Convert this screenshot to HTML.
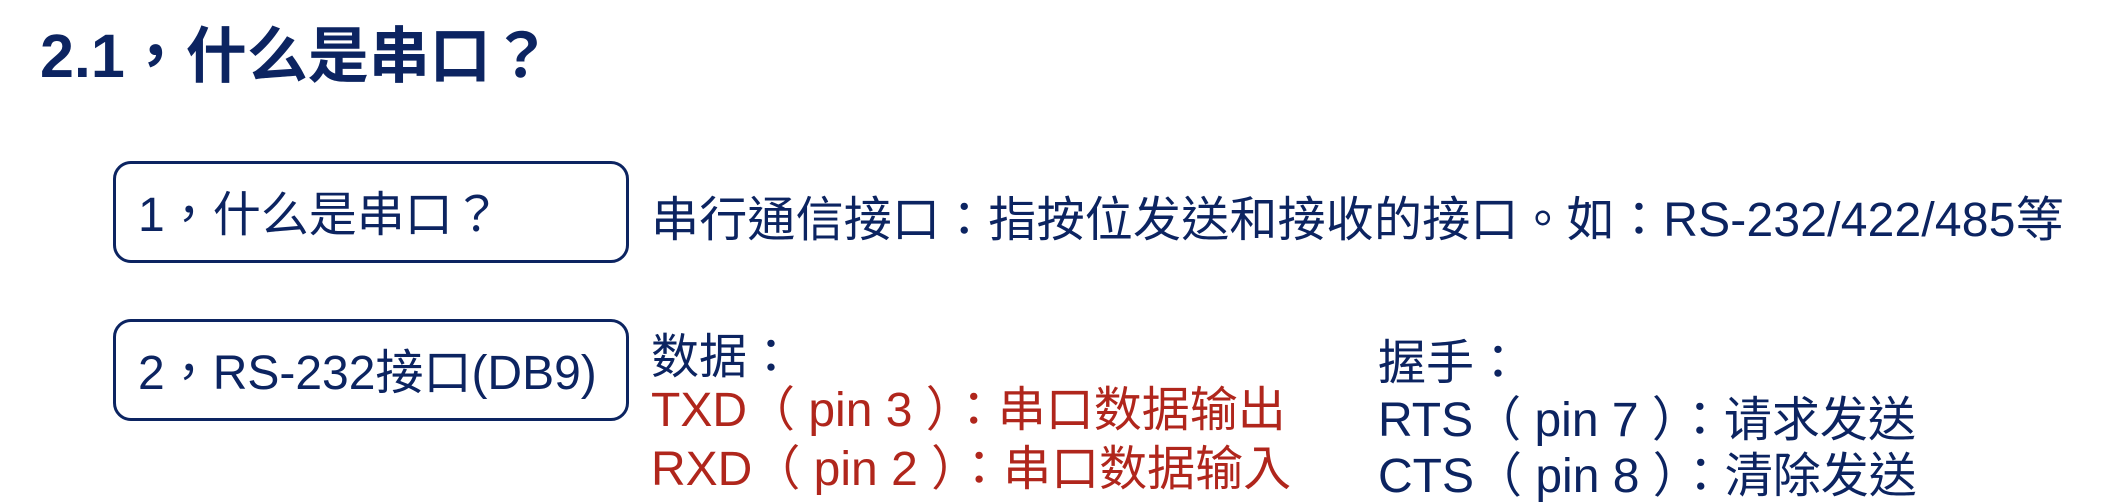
<!DOCTYPE html>
<html><head><meta charset="utf-8"><style>
html,body{margin:0;padding:0;background:#fff;}
body{width:2104px;height:494px;position:relative;overflow:hidden;font-family:"Liberation Sans","Noto Sans CJK TC",sans-serif;color:#0c2461;}
.t{position:absolute;white-space:nowrap;line-height:1;}
.box{position:absolute;border:3px solid #0c2461;border-radius:18px;box-sizing:border-box;}
.r{color:#b0261c;}
</style></head><body>
<div class="t" style="left:40px;top:26px;font-size:61px;font-weight:bold;">2.1，什么是串口？</div>
<div class="box" style="left:113px;top:161px;width:516px;height:102px;"></div>
<div class="box" style="left:113px;top:319px;width:516px;height:102px;"></div>
<div class="t" style="left:138px;top:192px;font-size:48px;">1，什么是串口？</div>
<div class="t" style="left:138px;top:350px;font-size:48px;">2，RS-232接口(DB9)</div>
<div class="t" style="left:651px;top:197px;font-size:48px;letter-spacing:0.2px;">串行通信接口：指按位发送和接收的接口。如：RS-232/422/485等</div>
<div class="t" style="left:651px;top:334px;font-size:48px;">数据：</div>
<div class="t r" style="left:651px;top:387px;font-size:48px;">TXD（ pin 3 ）：串口数据输出</div>
<div class="t r" style="left:651px;top:446px;font-size:48px;">RXD（ pin 2 ）：串口数据输入</div>
<div class="t" style="left:1378px;top:340px;font-size:48px;">握手：</div>
<div class="t" style="left:1378px;top:397px;font-size:48px;">RTS（ pin 7 ）：请求发送</div>
<div class="t" style="left:1378px;top:453px;font-size:48px;">CTS（ pin 8 ）：清除发送</div>
</body></html>
